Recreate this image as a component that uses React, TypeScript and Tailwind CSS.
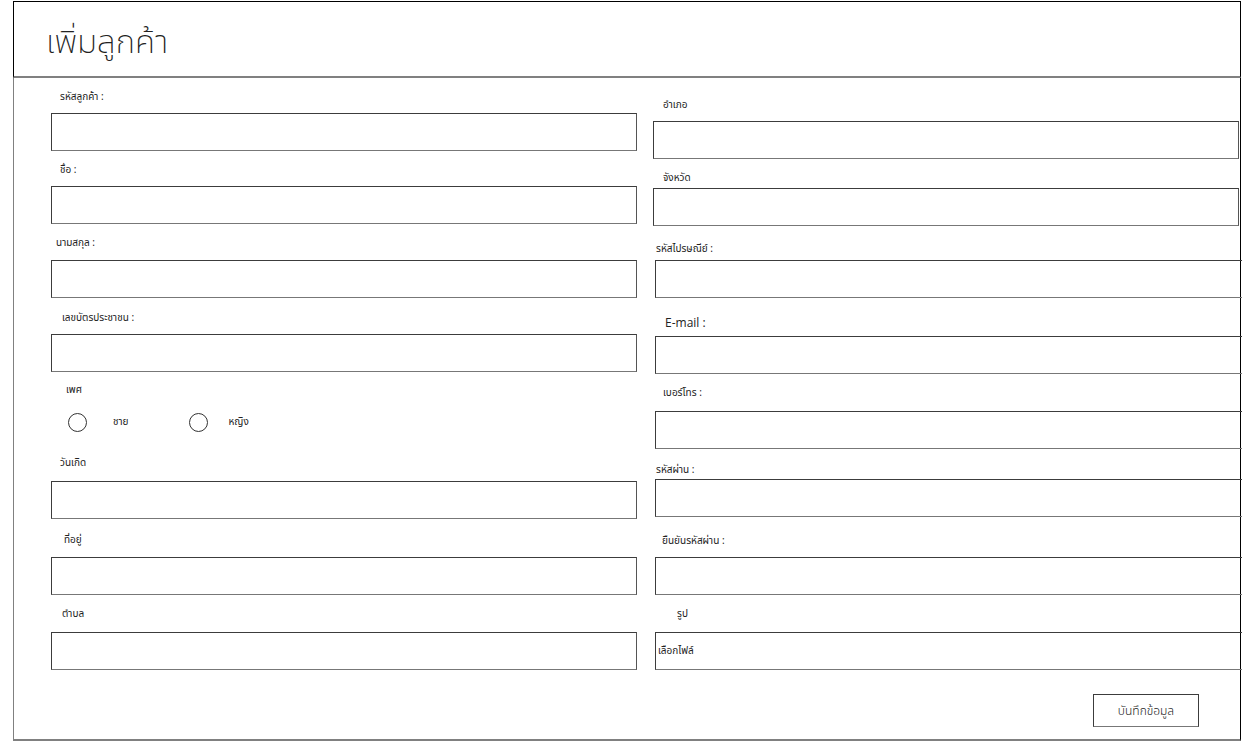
type Field = {
  label: string;
  labelClass: string;
  inputClass: string;
  value?: string;
};

const leftFields: Field[] = [
  { label: "รหัสลูกค้า :", labelClass: "mt-[12px] ml-[9px]", inputClass: "mt-[9px] w-[586px]" },
  { label: "ชื่อ :", labelClass: "mt-[12px] ml-[9px]", inputClass: "mt-[9px] w-[586px]" },
  { label: "นามสกุล :", labelClass: "mt-[12px] ml-[5px]", inputClass: "mt-[10px] w-[586px]" },
  { label: "เลขบัตรประชาชน :", labelClass: "mt-[13px] ml-[11px]", inputClass: "mt-[9px] w-[586px]" },
];

const leftFieldsAfter: Field[] = [
  { label: "วันเกิด", labelClass: "mt-[24px] ml-[9px]", inputClass: "mt-[11px] w-[586px]" },
  { label: "ที่อยู่", labelClass: "mt-[14px] ml-[13px]", inputClass: "mt-[10px] w-[586px]" },
  { label: "ตำบล", labelClass: "mt-[12px] ml-[11px]", inputClass: "mt-[11px] w-[586px]" },
];

const rightFields: Field[] = [
  { label: "อำเภอ", labelClass: "mt-[20px] ml-[10px]", inputClass: "mt-[9px] w-[586px]" },
  { label: "จังหวัด", labelClass: "mt-[12px] ml-[10px]", inputClass: "mt-[3px] w-[586px]" },
  { label: "รหัสไปรษณีย์ :", labelClass: "mt-[16px] ml-[3px]", inputClass: "mt-[4px] ml-[2px] w-[600px]" },
  { label: "เบอร์โทร :", labelClass: "mt-[12px] ml-[10px]", inputClass: "mt-[11px] ml-[2px] w-[600px]" },
  { label: "รหัสผ่าน :", labelClass: "mt-[14px] ml-[3px]", inputClass: "mt-[2px] ml-[2px] w-[600px]" },
  { label: "ยืนยันรหัสผ่าน :", labelClass: "mt-[17px] ml-[9px]", inputClass: "mt-[9px] ml-[2px] w-[600px]" },
  { label: "รูป", labelClass: "mt-[12px] ml-[24px]", inputClass: "mt-[11px] ml-[2px] w-[600px]", value: "เลือกไฟล์" },
];

const thai = "font-['Noto_Sans_Thai','Loma','Garuda','Noto_Sans',sans-serif]";

function FieldBlock({ f }: { f: Field }) {
  return (
    <>
      <div className={`h-[14px] text-[10px] leading-[14px] text-[#222] ${thai} ${f.labelClass}`}>{f.label}</div>
      <div
        className={`h-[38px] shrink-0 border border-[#3c3c3c] border-b-[#777] border-r-[#555] flex items-center pl-[2px] text-[10px] text-[#222] ${thai} ${f.inputClass}`}
      >
        {f.value}
      </div>
    </>
  );
}

function Radio({ label, gap }: { label: string; gap: string }) {
  return (
    <div className="flex items-center">
      <span className="w-[19px] h-[19px] rounded-full border border-[#333] bg-white" />
      <span className={`text-[10px] text-[#222] ${thai} ${gap}`}>{label}</span>
    </div>
  );
}

export default function App() {
  return (
    <div className="w-[1242px] h-[741px] bg-white overflow-hidden">
      <div className="ml-[13px] pt-[1px] w-[1228px]">
        {/* header */}
        <div className="h-[77px] border-t border-l border-r border-black border-b-2 border-b-[#808080] flex items-center pl-[32px]">
          <h1 className={`text-[33px] font-extralight leading-none text-[#222] mt-[8px] ${thai}`}>เพิ่มลูกค้า</h1>
        </div>

        {/* body */}
        <div className="h-[663px] border-l border-l-[#808080] border-r border-r-black border-b-2 border-b-[#808080] flex pl-[37px]">
          <div className="w-[586px] flex flex-col">
            {leftFields.map((f) => (
              <FieldBlock key={f.label} f={f} />
            ))}
            <div className={`h-[14px] text-[10px] leading-[14px] text-[#222] mt-[11px] ml-[15px] ${thai}`}>เพศ</div>
            <div className="mt-[15px] ml-[17px] h-[20px] flex items-center">
              <Radio label="ชาย" gap="ml-[26px]" />
              <div className="ml-[60px]">
                <Radio label="หญิง" gap="ml-[21px]" />
              </div>
            </div>
            {leftFieldsAfter.map((f) => (
              <FieldBlock key={f.label} f={f} />
            ))}
          </div>

          <div className="ml-[16px] w-[600px] flex flex-col">
            {rightFields.slice(0, 3).map((f) => (
              <FieldBlock key={f.label} f={f} />
            ))}
            <div className="mt-[18px] ml-[12px] h-[14px] text-[12px] leading-[14px] text-[#222] font-['Open_Sans',sans-serif]">
              E-mail :
            </div>
            <div className="mt-[6px] ml-[2px] w-[600px] h-[38px] shrink-0 border border-[#3c3c3c] border-b-[#777]" />
            {rightFields.slice(3).map((f) => (
              <FieldBlock key={f.label} f={f} />
            ))}
            <div className="flex justify-end pr-[54px] mt-[24px]">
              <button
                className={`w-[106px] h-[33px] border border-[#3c3c3c] border-b-[#777] bg-white text-[12px] font-light text-[#222] ${thai}`}
              >
                บันทึกข้อมูล
              </button>
            </div>
          </div>
        </div>
      </div>
    </div>
  );
}
